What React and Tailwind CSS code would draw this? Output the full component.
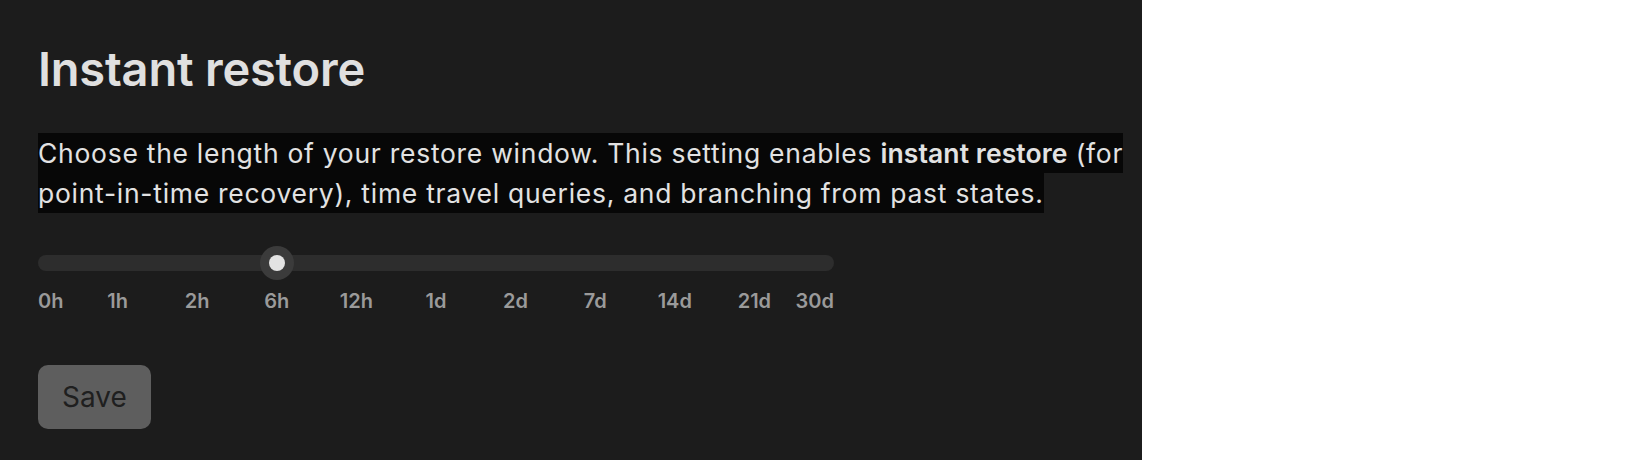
import React, { useState } from 'react';

const stops = ['0h', '1h', '2h', '6h', '12h', '1d', '2d', '7d', '14d', '21d', '30d'];

// label placement, written out so tailwind picks every class up
const labelPos = [
  'left-0',
  'left-[10%] -translate-x-1/2',
  'left-[20%] -translate-x-1/2',
  'left-[30%] -translate-x-1/2',
  'left-[40%] -translate-x-1/2',
  'left-[50%] -translate-x-1/2',
  'left-[60%] -translate-x-1/2',
  'left-[70%] -translate-x-1/2',
  'left-[80%] -translate-x-1/2',
  'left-[90%] -translate-x-1/2',
  'right-0',
];

function RestoreSlider({ value }) {
  const pct = (value / (stops.length - 1)) * 100;
  return (
    <div className="w-[796px]">
      <div className="relative h-[34px] flex items-center">
        <div className="w-full h-4 rounded-full bg-[#2d2d2d]" />
        <div
          className="absolute top-0 -translate-x-1/2 w-[34px] h-[34px] rounded-full bg-[#3b3b3b] flex items-center justify-center"
          style={{ left: `${pct}%` }}
        >
          <div className="w-4 h-4 rounded-full bg-[#e3e3e3]" />
        </div>
      </div>
      <div className="relative h-7 mt-[7px] text-[20px] leading-7 font-semibold text-[#9a9a9a]">
        {stops.map((s, i) => (
          <span key={s} className={`absolute top-0 ${labelPos[i]}`}>{s}</span>
        ))}
      </div>
    </div>
  );
}

export default function App() {
  const [value] = useState(3);

  return (
    <div className="flex w-full h-[460px] font-['Inter',sans-serif]">
      <div className="w-[1142px] shrink-0 bg-[#1c1c1c] pl-[38px] pt-[45px]">
        <h1 className="text-[47px] leading-[48px] font-semibold text-[#e0e0e0] tracking-[-0.2px]">Instant restore</h1>
        <p className="mt-[40px] w-[1100px] text-[26.5px] leading-[40px] tracking-[0.72px] text-[#e2e2e2]">
          <span className="bg-[#070707] py-[4px] box-decoration-clone">
            Choose the length of your restore window. This setting enables{' '}
            <span className="font-semibold tracking-[0.1px]">instant restore</span> (for point-in-time recovery), time travel queries, and branching from past states.
          </span>
        </p>
        <div className="mt-[33px]">
          <RestoreSlider value={value} />
        </div>
        <button className="mt-[50px] h-16 px-6 rounded-[10px] bg-[#5e5e5e] text-[28px] text-[#1f1f1f]">Save</button>
      </div>
      <div className="flex-1 bg-white" />
    </div>
  );
}
